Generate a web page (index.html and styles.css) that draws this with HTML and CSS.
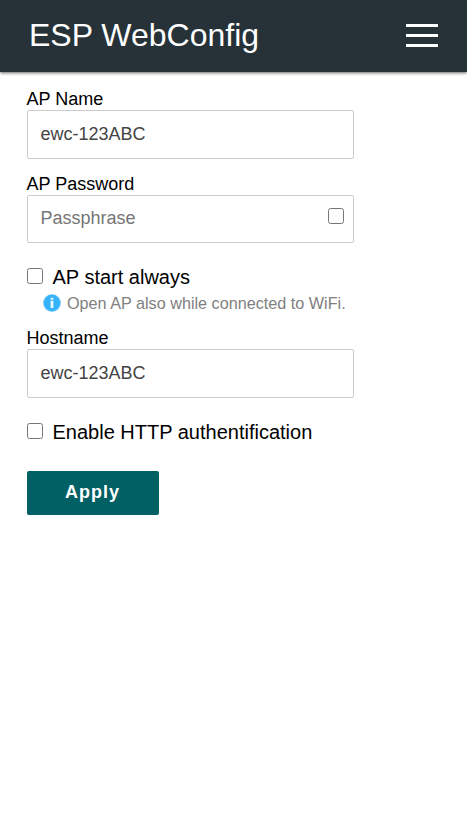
FILE: index.html
```html
<!DOCTYPE html>
<html lang="en">
<head>
<meta charset="utf-8">
<title>ESP WebConfig</title>
<link rel="stylesheet" href="styles.css">
</head>
<body>
<header class="bar">
  <h1 class="brand">ESP WebConfig</h1>
  <button class="menu" aria-label="Menu"><span></span><span></span><span></span></button>
</header>
<form class="form">
  <label class="label" for="name">AP Name</label>
  <input class="field" id="name" type="text" value="ewc-123ABC">
  <label class="label" for="pass">AP Password</label>
  <div class="secret">
    <input class="field" id="pass" type="password" placeholder="Passphrase">
    <input class="check reveal" type="checkbox">
  </div>
  <label class="option"><input class="check" type="checkbox"><span>AP start always</span></label>
  <p class="hint">
    <svg class="info" viewBox="0 0 18 18"><circle cx="9" cy="9" r="9" fill="#8fd6ff"/><circle cx="9" cy="9" r="8.3" fill="#36b3fb"/><path d="M7.6 3.8h2.8v2H7.6zM7.6 6.8h2.8v7.2H7.6z" fill="#e8f7ff"/></svg>
    <span>Open AP also while connected to WiFi.</span>
  </p>
  <label class="label" for="host">Hostname</label>
  <input class="field" id="host" type="text" value="ewc-123ABC">
  <label class="option auth"><input class="check" type="checkbox"><span>Enable HTTP authentification</span></label>
  <button class="apply" type="button">Apply</button>
</form>
</body>
</html>
```
FILE: styles.css
```css
* { box-sizing: border-box; }
body { margin: 0; background: #fff; color: #000; font-family: "Liberation Sans", Arial, sans-serif; }
.bar { height: 72px; padding: 15px 29px 0; display: flex; align-items: flex-start; justify-content: space-between; background: #263238; box-shadow: 0 1px 3px rgba(0,0,0,.6); }
.brand { margin: 0; font-size: 32px; line-height: 40px; font-weight: 400; color: #fff; }
.menu { width: 32px; height: 23px; margin-top: 9px; padding: 0; border: 0; background: none; display: flex; flex-direction: column; justify-content: space-between; }
.menu span { display: block; width: 32px; height: 3px; background: #fff; }
.form { width: 327px; margin: 16px 0 0 27px; display: flex; flex-direction: column; }
.label { margin-left: -0.5px; font-size: 18px; line-height: 22px; }
.field { width: 327px; height: 49px; margin: 0 0 14px; padding: 0 12.4px; border: 1px solid #ccc; border-radius: 2px; color: #444; font: 18px "Liberation Sans", Arial, sans-serif; }
.field::placeholder { color: #757575; }
.check { width: 16px; height: 16px; margin: 0; }
.secret { position: relative; height: 48px; }
.secret .field { height: 48px; padding-bottom: 2px; }
.reveal { position: absolute; right: 10px; top: 13px; }
.option { display: flex; align-items: center; gap: 9.5px; height: 24px; margin-top: 22px; font-size: 20px; }
.option .check { margin-bottom: 2px; }
.hint { display: flex; align-items: center; gap: 6px; height: 20px; margin: 4px 0 14px 16px; font-size: 16.2px; color: #808080; white-space: nowrap; }
.hint span { padding-top: 1px; }
.info { width: 18px; height: 18px; }
.auth { margin-top: 8px; }
.apply { width: 132px; height: 44px; margin-top: 27px; padding: 0 1px 2px 0; border: 0; border-radius: 2px; background: #006064; color: #fff; font: bold 18px "Liberation Sans", Arial, sans-serif; letter-spacing: 1px; }
```
